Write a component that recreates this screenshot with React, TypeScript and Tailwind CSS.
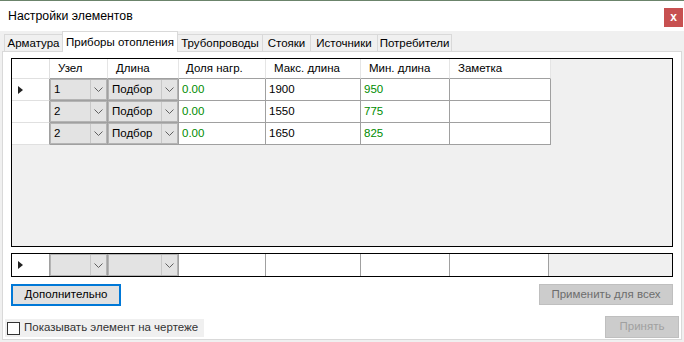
import React from "react";

const font = "font-['Liberation_Sans',Arial,sans-serif]";

const rows = [
  { node: "1", len: "Подбор", share: "0.00", max: "1900", min: "950", current: true },
  { node: "2", len: "Подбор", share: "0.00", max: "1550", min: "775", current: false },
  { node: "2", len: "Подбор", share: "0.00", max: "1650", min: "825", current: false },
];

function Arrow() {
  return <div className="h-0 w-0 border-y-[4.5px] border-l-[5px] border-y-transparent border-l-[#222222]" />;
}

function Chevron() {
  return (
    <svg width="9" height="5" viewBox="0 0 9 5" className="block">
      <path d="M0.5 0.5 L4.5 4.5 L8.5 0.5" fill="none" stroke="#606060" strokeWidth="1" />
    </svg>
  );
}

function Combo({ value, width, arrowLeft }: { value: string; width: string; arrowLeft: string }) {
  return (
    <div className={`${width} h-full shrink-0 border-b border-r border-[#a0a0a0]`}>
      <div className="flex h-full border border-[#b4b4b4] bg-[#e3e3e3]">
        <div className={`${arrowLeft} flex items-center pl-[3px] text-black`}>{value}</div>
        <div className="flex flex-1 items-center justify-center border-l border-[#c8c8c8]">
          <Chevron />
        </div>
      </div>
    </div>
  );
}

export default function App() {
  return (
    <div className={`${font} flex h-[342px] w-[684px] flex-col overflow-hidden whitespace-nowrap border-t border-[#6b846b] bg-[#f0f0f0] text-[11px] text-black`}>
      <div className="flex h-[30px] shrink-0 items-center justify-between bg-white pl-[8px] pr-[1px]">
        <span className="text-[12.3px]">Настройки элементов</span>
        <div className="mt-[2px] flex h-[19px] w-[19px] items-center justify-center bg-[#c75050] text-[12px] font-bold leading-none text-white">
          x
        </div>
      </div>

      <div className="flex flex-1 flex-col px-[2px] pb-[2px]">
        <div className="flex h-[21px] shrink-0 items-end pl-[2px] text-[11.5px]">
          <div className="flex h-[18px] w-[58px] items-center justify-center border-l border-t border-[#d9d9d9]">Арматура</div>
          <div className="relative z-10 flex h-[21px] w-[116px] items-start justify-center border-x border-t border-[#d9d9d9] bg-white pt-[2px]">
            Приборы отопления
          </div>
          <div className="flex h-[18px] w-[84px] items-center justify-center border-t border-[#d9d9d9]">Трубопроводы</div>
          <div className="flex h-[18px] w-[48px] items-center justify-center border-l border-t border-[#d9d9d9]">Стояки</div>
          <div className="flex h-[18px] w-[67px] items-center justify-center border-l border-t border-[#d9d9d9]">Источники</div>
          <div className="flex h-[18px] w-[75px] items-center justify-center border-x border-t border-[#d9d9d9]">Потребители</div>
        </div>

        <div className="-mt-px flex flex-1 flex-col border border-[#d9d9d9] bg-white">
          <div className="mx-[8px] mt-[6px] flex h-[189px] flex-col border border-black bg-[#f0f0f0] text-[11.5px]">
            <div className="flex h-[20px] shrink-0">
              <div className="w-[38px] shrink-0 border-b border-r border-[#e0e0e0] bg-white" />
              <div className="flex w-[58px] shrink-0 items-center border-b border-r border-[#e5e5e5] border-b-[#a0a0a0] bg-white pl-[8px]">Узел</div>
              <div className="flex w-[71px] shrink-0 items-center border-b border-r border-[#e5e5e5] border-b-[#a0a0a0] bg-white pl-[8px]">Длина</div>
              <div className="flex w-[87px] shrink-0 items-center border-b border-r border-[#e5e5e5] border-b-[#a0a0a0] bg-white pl-[7px]">Доля нагр.</div>
              <div className="flex w-[95px] shrink-0 items-center border-b border-r border-[#e5e5e5] border-b-[#a0a0a0] bg-white pl-[8px]">Макс. длина</div>
              <div className="flex w-[89px] shrink-0 items-center border-b border-r border-[#e5e5e5] border-b-[#a0a0a0] bg-white pl-[8px]">Мин. длина</div>
              <div className="flex w-[101px] shrink-0 items-center border-b border-r border-[#e5e5e5] border-b-[#a0a0a0] bg-white pl-[8px]">Заметка</div>
            </div>
            {rows.map((r, i) => (
              <div key={i} className="flex h-[22px] shrink-0">
                <div className="flex w-[38px] shrink-0 items-center border-b border-r border-[#e0e0e0] border-r-[#a0a0a0] bg-white pl-[6px]">
                  {r.current && <Arrow />}
                </div>
                <Combo value={r.node} width="w-[58px]" arrowLeft="w-[39px]" />
                <Combo value={r.len} width="w-[71px]" arrowLeft="w-[52px]" />
                <div className="flex w-[87px] shrink-0 items-center border-b border-r border-[#a0a0a0] bg-white pl-[3px] text-[#008c00]">{r.share}</div>
                <div className="flex w-[95px] shrink-0 items-center border-b border-r border-[#a0a0a0] bg-white pl-[3px]">{r.max}</div>
                <div className="flex w-[89px] shrink-0 items-center border-b border-r border-[#a0a0a0] bg-white pl-[3px] text-[#008c00]">{r.min}</div>
                <div className="w-[101px] shrink-0 border-b border-r border-[#a0a0a0] bg-white" />
              </div>
            ))}
          </div>

          <div className="mx-[8px] mt-[6px] flex h-[24px] border border-black bg-[#f0f0f0]">
            <div className="flex w-[38px] shrink-0 items-center border-r border-[#a0a0a0] bg-white pl-[6px]">
              <Arrow />
            </div>
            <div className="w-[58px] shrink-0 border-r border-[#a0a0a0]">
              <div className="flex h-full border border-[#b4b4b4] bg-[#e3e3e3]">
                <div className="w-[39px]" />
                <div className="flex flex-1 items-center justify-center border-l border-[#c8c8c8]"><Chevron /></div>
              </div>
            </div>
            <div className="w-[71px] shrink-0 border-r border-[#a0a0a0]">
              <div className="flex h-full border border-[#b4b4b4] bg-[#e3e3e3]">
                <div className="w-[52px]" />
                <div className="flex flex-1 items-center justify-center border-l border-[#c8c8c8]"><Chevron /></div>
              </div>
            </div>
            <div className="w-[87px] shrink-0 border-r border-[#a0a0a0] bg-white" />
            <div className="w-[95px] shrink-0 border-r border-[#a0a0a0] bg-white" />
            <div className="w-[89px] shrink-0 border-r border-[#a0a0a0] bg-white" />
            <div className="w-[99px] shrink-0 border-r border-[#a0a0a0] bg-white" />
          </div>

          <div className="mx-[8px] mt-[7px] flex h-[22px] items-start justify-between text-[11.5px]">
            <button className="flex h-[22px] w-[110px] items-center justify-center border-2 border-[#0078d7] bg-[#e1e1e1]">
              Дополнительно
            </button>
            <button className="flex h-[21px] w-[134px] items-center justify-center border border-[#bfbfbf] bg-[#cccccc] text-[#6d6d6d]">
              Применить для всех
            </button>
          </div>

          <div className="mt-auto flex items-end justify-between pb-[1px] pl-[2px] pr-[2px] text-[11.5px]">
            <label className="mb-[1px] flex h-[18px] w-[199px] items-center gap-[4px] bg-[#f0f0f0] pl-[2px]">
              <span className="h-[13px] w-[13px] shrink-0 border border-[#333333] bg-white" />
              <span className="text-[#333333]">Показывать элемент на чертеже</span>
            </label>
            <button className="flex h-[22px] w-[74px] items-center justify-center border border-[#bfbfbf] bg-[#cccccc] text-[#a0a0a0]">
              Принять
            </button>
          </div>
        </div>
      </div>
    </div>
  );
}
